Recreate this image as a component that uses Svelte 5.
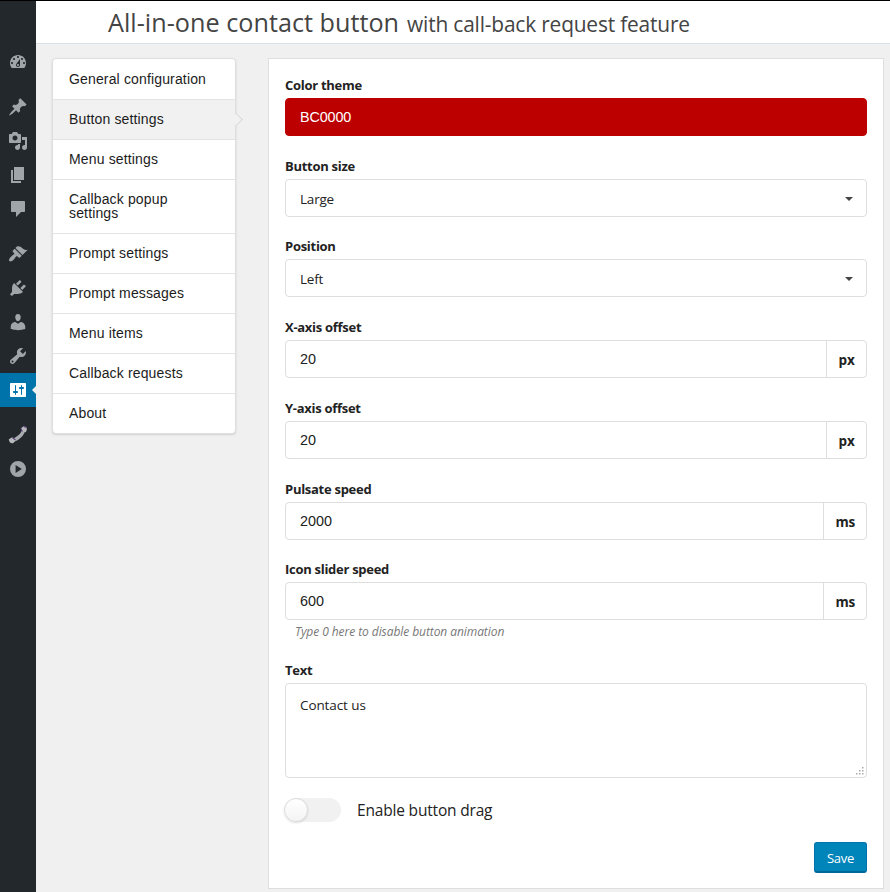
<script>
  const rail = [
    { id: 'dashboard', d: 'M3.76 16h12.48c1.1-1.37 1.76-3.11 1.76-5 0-4.42-3.58-8-8-8s-8 3.58-8 8c0 1.89.66 3.63 1.76 5zM10 4c.55 0 1 .45 1 1s-.45 1-1 1-1-.45-1-1 .45-1 1-1zM6 6c.55 0 1 .45 1 1s-.45 1-1 1-1-.45-1-1 .45-1 1-1zm8 0c.55 0 1 .45 1 1s-.45 1-1 1-1-.45-1-1 .45-1 1-1zm-5.37 5.55L12 7v6c0 1.1-.9 2-2 2s-2-.9-2-2c0-.57.24-1.08.63-1.45zM4 10c.55 0 1 .45 1 1s-.45 1-1 1-1-.45-1-1 .45-1 1-1zm12 0c.55 0 1 .45 1 1s-.45 1-1 1-1-.45-1-1 .45-1 1-1zm-5 3c0-.55-.45-1-1-1s-1 .45-1 1 .45 1 1 1 1-.45 1-1z' },
    { id: 'posts', gap: true, d: 'M10.44 3.02l1.82-1.82 6.36 6.35-1.83 1.82c-1.05-.68-2.48-.57-3.41.36l-.75.75c-.92.93-1.04 2.35-.35 3.41l-1.83 1.82-2.41-2.41-2.8 2.79c-.42.42-3.38 2.71-3.8 2.29s1.86-3.39 2.28-3.81l2.79-2.79L4.1 9.36l1.83-1.82c1.05.69 2.48.57 3.4-.36l.75-.75c.93-.92 1.05-2.35.36-3.41z' },
    { id: 'media', d: 'M13 11V4c0-.55-.45-1-1-1h-1.67L9 1H5L3.67 3H2c-.55 0-1 .45-1 1v7c0 .55.45 1 1 1h10c.55 0 1-.45 1-1zM7 4.5c1.38 0 2.5 1.12 2.5 2.5S8.38 9.5 7 9.5 4.5 8.38 4.5 7 5.62 4.5 7 4.5zM14 6h5v10.5c0 1.38-1.12 2.5-2.5 2.5S14 17.88 14 16.5s1.12-2.5 2.5-2.5c.17 0 .34.02.5.05V9h-3V6zm-4 8.05V13h2v3.5c0 1.38-1.12 2.5-2.5 2.5S7 17.88 7 16.5 8.12 14 9.5 14c.17 0 .34.02.5.05z' },
    { id: 'pages', d: 'M6 15V2h10v13H6zm-1 1h8v2H3V5h2v11z' },
    { id: 'comments', d: 'M4 2h12c.55 0 1 .45 1 1v9c0 .55-.45 1-1 1h-3l-5 5v-5H4c-.55 0-1-.45-1-1V3c0-.55.45-1 1-1z' },
    { id: 'appearance', gap: true, d: 'M14.48 11.06L7.41 3.99l1.5-1.5c.5-.56 2.3-.47 3.51.32 1.21.8 1.43 1.28 2.91 2.1 1.18.64 2.45 1.26 4.45.85zm-.71.71L6.7 4.7 4.93 6.47c-.39.39-.39 1.02 0 1.41l1.06 1.06c.39.39.39 1.03 0 1.42-.6.6-1.43 1.11-2.21 1.69-.35.26-.7.53-1.01.84C1.43 14.23.4 16.08 1.4 17.07c.99 1 2.84-.03 4.18-1.36.31-.31.58-.66.85-1.02.57-.78 1.08-1.61 1.69-2.21.39-.39 1.02-.39 1.41 0l1.06 1.06c.39.39 1.02.39 1.41 0z' },
    { id: 'plugins', d: 'M13.11 4.36L9.87 7.6 8 5.73l3.24-3.24c.35-.34 1.05-.2 1.56.32.52.51.66 1.21.31 1.55zm-8 1.77l.91-1.12 9.01 9.01-1.19.84c-.71.71-2.63 1.16-3.82 1.16H6.14L4.9 17.26c-.59.59-1.54.59-2.12 0-.59-.58-.59-1.53 0-2.12l1.24-1.24v-3.88c0-1.13.4-3.19 1.09-3.89zm7.26 3.97l3.24-3.24c.34-.35 1.04-.21 1.55.31.52.51.66 1.21.31 1.55l-3.24 3.25z' },
    { id: 'users', d: 'M10 9.25c-2.27 0-2.73-3.44-2.73-3.44C7 4.02 7.82 2 9.97 2c2.16 0 2.98 2.02 2.71 3.81 0 0-.41 3.44-2.68 3.44zm0 2.57L12.72 10c2.39 0 4.52 2.33 4.52 4.53v2.49s-3.65 1.13-7.24 1.13c-3.65 0-7.24-1.13-7.24-1.13v-2.49c0-2.25 1.94-4.48 4.47-4.48z' },
    { id: 'tools', d: 'M16.68 9.77c-1.34 1.34-3.3 1.67-4.95.99l-5.41 6.52c-.99.99-2.59.99-3.58 0s-.99-2.59 0-3.57l6.52-5.42c-.68-1.65-.35-3.61.99-4.95 1.28-1.28 3.12-1.62 4.72-1.06l-2.89 2.89 2.82 2.82 2.86-2.87c.53 1.58.18 3.39-1.08 4.65zM3.81 16.21c.4.39 1.04.39 1.43 0 .4-.4.4-1.04 0-1.43-.39-.4-1.03-.4-1.43 0-.39.39-.39 1.03 0 1.43z' },
    { id: 'settings', active: true, d: 'M18 16V4c0-.55-.45-1-1-1H3c-.55 0-1 .45-1 1v12c0 .55.45 1 1 1h14c.55 0 1-.45 1-1zM8 11h1c.55 0 1 .45 1 1s-.45 1-1 1H8v1.5c0 .28-.22.5-.5.5s-.5-.22-.5-.5V13H6c-.55 0-1-.45-1-1s.45-1 1-1h1V5.5c0-.28.22-.5.5-.5s.5.22.5.5V11zm5-2h-1c-.55 0-1-.45-1-1s.45-1 1-1h1V5.5c0-.28.22-.5.5-.5s.5.22.5.5V7h1c.55 0 1 .45 1 1s-.45 1-1 1h-1v5.5c0 .28-.22.5-.5.5s-.5-.22-.5-.5V9z' },
    { id: 'phone', gap: true },
    { id: 'collapse', d: 'M10 2a8 8 0 1 0 0 16 8 8 0 0 0 0-16zM7.6 6l6.2 4-6.2 4z' }
  ];

  const tabs = ['General configuration', 'Button settings', 'Menu settings', 'Callback popup settings', 'Prompt settings', 'Prompt messages', 'Menu items', 'Callback requests', 'About'];

  const fields = [
    { label: 'Color theme', value: 'BC0000', kind: 'color' },
    { label: 'Button size', value: 'Large', kind: 'select' },
    { label: 'Position', value: 'Left', kind: 'select' },
    { label: 'X-axis offset', value: '20', unit: 'px' },
    { label: 'Y-axis offset', value: '20', unit: 'px' },
    { label: 'Pulsate speed', value: '2000', unit: 'ms' },
    { label: 'Icon slider speed', value: '600', unit: 'ms', hint: 'Type 0 here to disable button animation' }
  ];
</script>

<div class="page">
  <nav class="rail">
    {#each rail as item (item.id)}
      <div class="rail-item" class:gap={item.gap} class:active={item.active}>
        <svg width="20" height="20" viewBox="0 0 20 20">
          {#if item.id === 'phone'}
            <path d="M3.2 15.6C8.5 15.5 15.8 9 15.8 3.4" fill="none" stroke="#a9acb0" stroke-width="3.4" />
            <path d="M.8 14.2l3.5-2 3.4 3-2.6 3c-2.2.6-4-.8-4.3-4z" fill="#b8b9bb" />
            <path d="M12.8 3.4l2.9-2.4 2.5 1c1.1 1.7.7 3.9-.6 5.2l-3.2-1z" fill="#b8b9bb" />
            <path d="M4.4 12.5l3.2 2.6M13 3.5l1.4 2.9M15.5 1.3l2.4 1.3" fill="none" stroke="#5b3f78" stroke-width="1.1" />
          {:else}
            <path d={item.d} fill="currentColor" fill-rule={item.id === 'dashboard' ? 'nonzero' : 'evenodd'} />
          {/if}
        </svg>
      </div>
    {/each}
  </nav>

  <div class="main">
    <header>
      <h1><span class="big">All-in-one contact button</span><span class="small">with call-back request feature</span></h1>
    </header>
    <div class="body">
      <div class="tabs">
        {#each tabs as tab, i}
          <div class="tab" class:current={i === 1} class:wrap={i === 3}>{tab}</div>
        {/each}
      </div>

      <section class="panel">
        {#each fields as f}
          <div class="field">
            <div class="label">{f.label}</div>
            <div class="control {f.kind ?? 'text'}">
              <span class="value">{f.value}</span>
              {#if f.kind === 'select'}<i class="caret"></i>{/if}
              {#if f.unit}<span class="unit {f.unit}">{f.unit}</span>{/if}
            </div>
            {#if f.hint}<div class="hint">{f.hint}</div>{/if}
          </div>
        {/each}
        <div class="text-field">
          <div class="label">Text</div>
          <div class="area">
            <span>Contact us</span>
            <svg class="grip" width="8" height="8" viewBox="0 0 8 8" fill="#aaa">
              <path d="M6 0h1.5v1.5H6zM3 3h1.5v1.5H3zM6 3h1.5v1.5H6zM0 6h1.5v1.5H0zM3 6h1.5v1.5H3zM6 6h1.5v1.5H6z" />
            </svg>
          </div>
        </div>
        <div class="toggle-row">
          <div class="toggle"><div class="knob"></div></div>
          <span class="toggle-label">Enable button drag</span>
        </div>
        <div class="actions"><button>Save</button></div>
      </section>
    </div>
  </div>
</div>

<style>
  :global(body) { background: #f0f0f0; }
  .page {
    box-sizing: border-box;
    display: flex;
    width: 890px;
    height: 892px;
    border-top: 1px solid #000;
    overflow: hidden;
    font-family: 'Open Sans', 'Noto Sans', sans-serif;
    color: #222;
  }
  .rail {
    flex: none;
    width: 36px;
    padding-top: 44px;
    background: #23282d;
    box-sizing: border-box;
  }
  .rail-item {
    position: relative;
    height: 34px;
    display: flex;
    align-items: center;
    justify-content: center;
    color: #a0a5aa;
  }
  .rail-item.gap { margin-top: 11px; }
  .rail-item svg { display: block; }
  .rail-item.active { background: #0073aa; color: #fff; }
  .rail-item.active::after {
    content: '';
    position: absolute;
    right: 0;
    top: 13px;
    border: 4px solid transparent;
    border-left: 0;
    border-right-color: #f0f0f0;
  }
  .main { flex: 1; display: flex; flex-direction: column; min-width: 0; }
  header {
    height: 42px;
    flex: none;
    background: #fff;
    border-bottom: 1px solid #dae0e5;
  }
  h1 {
    display: flex;
    align-items: baseline;
    gap: 8px;
    margin: 0 0 0 72px;
    font-weight: 400;
    line-height: 43px;
    color: #444;
    white-space: nowrap;
  }
  .big { font-size: 25.2px; letter-spacing: 0.02px; }
  .small { font-size: 20.9px; letter-spacing: -0.18px; }
  .body { display: flex; align-items: flex-start; padding: 14px 6px 0 16px; }
  .tabs {
    box-sizing: border-box;
    width: 184px;
    flex: none;
    background: #fff;
    border: 1px solid #dedede;
    border-radius: 4px;
    box-shadow: 0 1px 2px rgba(34, 36, 38, .15);
    font: 14px/14px 'Liberation Sans', Arial, sans-serif;
    letter-spacing: 0.15px;
    color: #1c1c1c;
  }
  .tab { position: relative; padding: 12px 10px 13px 16px; border-top: 1px solid #e3e3e3; }
  .tab:first-child { border-top: 0; padding-top: 13px; }
  .tab.wrap { padding-right: 50px; }
  .tab.current { background: #f1f1f1; }
  .tab.current::after {
    content: '';
    position: absolute;
    width: 8px;
    height: 8px;
    right: -6px;
    top: 15px;
    background: #f1f1f1;
    border: solid #dadada;
    border-width: 1px 1px 0 0;
    transform: rotate(45deg);
  }
  .panel {
    box-sizing: border-box;
    margin-left: 32px;
    width: 616px;
    flex: none;
    height: 831px;
    padding: 17px 16px 0;
    background: #fff;
    border: 1px solid #dedede;
  }
  .field { height: 80.74px; }
  .field:nth-child(7) { height: 100.6px; }
  .label {
    height: 22px;
    line-height: 19px;
    font-size: 13px;
    font-weight: 700;
    letter-spacing: -0.28px;
  }
  .control {
    box-sizing: border-box;
    height: 38px;
    display: flex;
    align-items: center;
    border: 1px solid #dededf;
    border-radius: 4px;
    font-size: 13.5px;
    letter-spacing: -0.2px;
  }
  .value { flex: 1; padding-left: 14px; }
  .select .value { padding-top: 2px; }
  .text .value, .color .value { font: 14.4px 'Liberation Sans', Arial, sans-serif; letter-spacing: 0; }
  .color .value { letter-spacing: -0.15px; }
  .color { background: #bc0000; border-color: #bc0000; color: #fff; }
  .caret { margin: 2px 13px 0 0; border: 4px solid transparent; border-top-color: #444; border-bottom: 0; }
  .unit {
    align-self: stretch;
    padding: 1px 11px 0;
    line-height: 37px;
    border-left: 1px solid #dededf;
    font-weight: 700;
  }
  .unit.px { padding: 1px 11.5px 0; }
  .hint { margin: 3px 0 0 10px; font-size: 12px; line-height: 17px; font-style: italic; color: #777; letter-spacing: -0.07px; }
  .area {
    position: relative;
    box-sizing: border-box;
    height: 95px;
    padding: 11px 14px;
    border: 1px solid #dededf;
    border-radius: 4px;
    font-size: 13.5px;
    line-height: 20px;
    letter-spacing: -0.1px;
  }
  .grip { position: absolute; right: 2px; bottom: 2px; }
  .toggle-row { display: flex; align-items: center; height: 24px; margin-top: 20px; }
  .toggle { width: 56px; height: 24px; border-radius: 12px; background: #f1f1f1; }
  .knob {
    box-sizing: border-box;
    width: 24px;
    height: 24px;
    margin-left: -1px;
    border: 1px solid #dcdcdc;
    border-radius: 50%;
    background: linear-gradient(#fff, #f4f4f4);
    box-shadow: 0 1px 2px rgba(34, 36, 38, .15);
  }
  .toggle-label { margin-left: 16px; font-size: 15.5px; letter-spacing: -0.18px; }
  .actions { display: flex; justify-content: flex-end; margin-top: 20px; }
  button {
    box-sizing: border-box;
    width: 53px;
    height: 31px;
    padding: 2px 0 0;
    border: 1px solid #0073aa;
    border-bottom: 2px solid #006799;
    border-radius: 3px;
    background: #0085ba;
    color: #fff;
    font: 13px 'Open Sans', sans-serif;
    letter-spacing: -0.3px;
  }
</style>
